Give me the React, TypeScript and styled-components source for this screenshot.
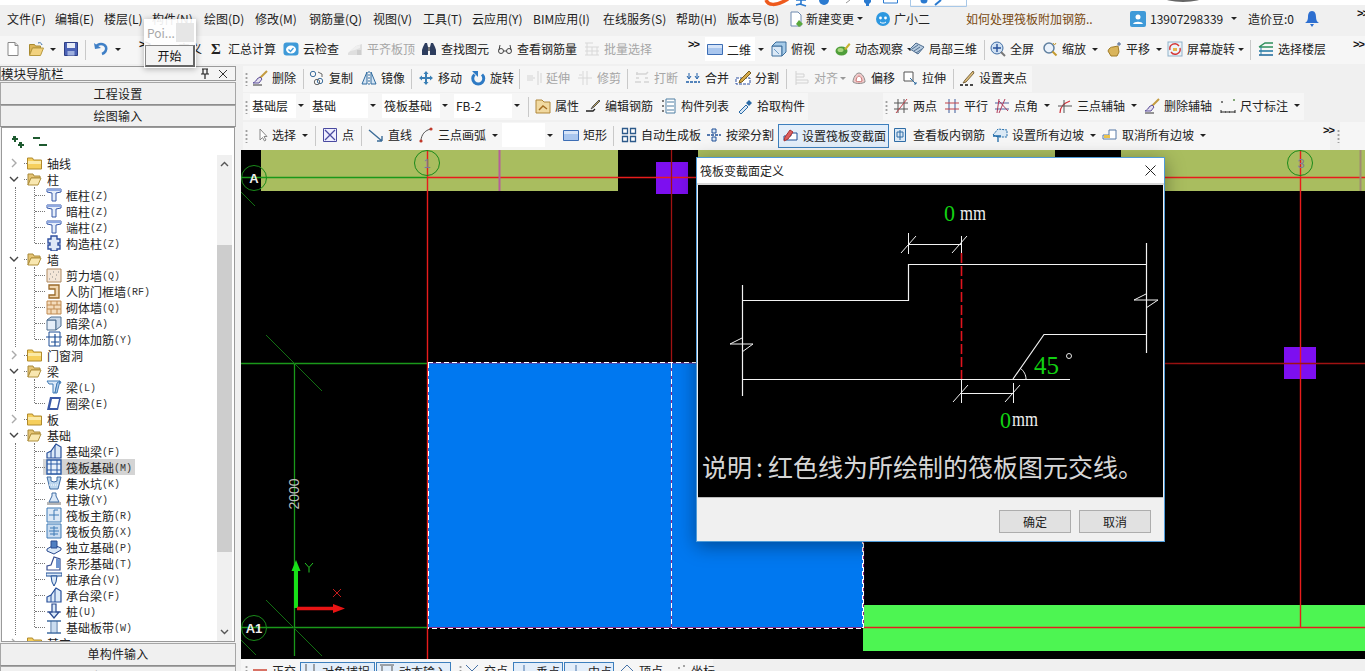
import React from 'react';
import styled, { createGlobalStyle } from 'styled-components';

const Global = createGlobalStyle`
  html, body { margin: 0; padding: 0; background: #f0f0f0; }
  * { box-sizing: border-box; }
  body { font-family: "Noto Sans CJK SC", "Liberation Sans", sans-serif; font-size: 12px; color: #222; }
`;

const Shell = styled.div`
  position: relative; width: 1365px; height: 671px; overflow: hidden;
  display: flex; flex-direction: column; background: #f0f0f0;
`;
const TopStrip = styled.div`height: 5px; background: #fff; flex: none;`;
const ImeBar = styled.svg`position: absolute; left: 760px; top: 0; width: 460px; height: 9px;`;
const Bar = styled.div<{ $h: number; $bg?: string; $pb?: number; $top?: number; $w?: number }>`
  flex: none; height: ${p => p.$h}px; display: flex; align-items: center; white-space: nowrap;
  background: ${p => p.$bg || 'transparent'};
  padding-bottom: ${p => p.$pb || 0}px;
  margin-top: ${p => p.$top || 0}px;
  width: ${p => (p.$w ? p.$w + 'px' : 'auto')};
`;
const Item = styled.div<{ $w?: number; $muted?: boolean; $pad?: number }>`
  flex: none; display: flex; align-items: center; height: 100%;
  width: ${p => (p.$w ? p.$w + 'px' : 'auto')};
  padding-left: ${p => p.$pad || 0}px; padding-bottom: 2px;
  color: ${p => (p.$muted ? '#a6a6a6' : '#222')};
  line-height: 16px;
`;
const GlyphSvg = styled.svg<{ $muted?: boolean; $flush?: boolean }>`
  flex: none; width: 16px; height: 16px; margin-right: ${p => (p.$flush ? 0 : 4)}px; display: block;
  opacity: ${p => (p.$muted ? 0.5 : 1)};
`;
const MenuGlyph = styled(GlyphSvg)`margin-right: 2px;`;
const Caret = styled.i<{ $gap?: number; $muted?: boolean }>`
  flex: none; width: 0; height: 0; margin-left: ${p => p.$gap ?? 6}px;
  border-left: 3px solid transparent; border-right: 3px solid transparent;
  border-top: 3px solid ${p => (p.$muted ? '#999' : '#222')};
`;
const Sep = styled.div<{ $w: number }>`
  flex: none; width: ${p => p.$w}px; height: 20px; border-left: 1px solid #c9c9c9;
`;
const Grip = styled.div<{ $w: number; $left?: number }>`
  flex: none; width: ${p => p.$w}px; height: 14px; margin-left: ${p => p.$left || 0}px;
  background-image: radial-gradient(circle, #a0a0a0 1px, transparent 1.2px);
  background-size: 3px 4px; background-repeat: repeat-y; background-position: 2px 0;
`;
const More = styled.div<{ $w: number; $pad?: number }>`
  flex: none; width: ${p => p.$w}px; padding-left: ${p => p.$pad || 0}px; align-self: flex-start;
  font: bold 11px/14px "Liberation Sans", sans-serif; letter-spacing: -1px; color: #111; padding-top: 1px;
`;
const Spacer = styled.div<{ $w: number }>`flex: none; width: ${p => p.$w}px;`;
const ToolGroup = styled.div<{ $left?: number; $bg?: string }>`
  display: flex; align-items: center; height: 100%; margin-left: ${p => p.$left || 0}px;
  background: ${p => p.$bg || '#f6f6f6'};
`;
const ComboBox = styled.div<{ $w: number; $pad?: number }>`
  flex: none; width: ${p => p.$w}px; height: 24px; background: #fff; display: flex; align-items: center;
  padding-left: ${p => p.$pad ?? 2}px;
`;
const ComboWrap = styled.div<{ $w: number }>`flex: none; width: ${p => p.$w}px; display: flex; align-items: center; height: 100%; padding-bottom: 2px;`;
const ActiveTool = styled.div<{ $w: number; $pad: number; $h: number; $left?: number }>`
  flex: none; width: ${p => p.$w}px; height: ${p => p.$h}px; padding: 0 0 1px ${p => p.$pad}px;
  margin-left: ${p => p.$left || 0}px; white-space: nowrap;
  display: flex; align-items: center; border: 1px solid #3d7fbd; background: #e3eefa; overflow: hidden;
`;
const Notice = styled(Item)`color: #7a4a12;`;
const Body = styled.div`flex: 1; min-height: 0; display: flex;`;
const Sidebar = styled.aside`flex: none; width: 241px; display: flex; flex-direction: column; padding-top: 2px; overflow: hidden;`;
const PanelHead = styled.div`
  width: 236px; height: 15px; flex: none; display: flex; align-items: center; background: #f4f4f4;
  border: 1px solid #9a9a9a; line-height: 13px; font-size: 12.5px; overflow: hidden; margin-bottom: 1px;
`;
const HeadTitle = styled.span`flex: 1;`;
const HeadBtn = styled.svg`flex: none; width: 12px; height: 12px; margin-right: 6px;`;
const NavButton = styled.div<{ $h: number; $pb?: number }>`
  width: 236px; height: ${p => p.$h}px; flex: none; display: flex; align-items: center; justify-content: center;
  background: #f0f0f0; border: 1px solid #a6a6a6; border-bottom-color: #8e8e8e; letter-spacing: 0.2px; padding-bottom: ${p => p.$pb ?? 2}px;
`;
const TreePanel = styled.div`
  width: 234px; height: 515px; flex: none; margin: 0 0 1px 1px; background: #fff; border: 1px solid #9a9a9a;
  padding: 0 2px 0 1px; display: flex; flex-direction: column;
`;
const ExpandBar = styled.div`flex: none; height: 27px; display: flex; align-items: center; padding: 0 0 0 8px; gap: 5px;`;
const TreeArea = styled.div`flex: 1; min-height: 0; display: flex;`;
const TreeList = styled.div`flex: 1; min-width: 0; overflow: hidden;`;
const Row = styled.div<{ $pad: number }>`
  height: 16px; display: flex; align-items: center; padding-left: ${p => p.$pad}px; position: relative; white-space: nowrap;
`;
const Chev = styled.svg`flex: none; width: 10px; height: 10px; margin-right: 5px;`;
const FolderDots = styled.span`flex: none; width: 3px; border-top: 1px dotted #777;`;
const FolderSvg = styled.svg`flex: none; width: 15px; height: 14px; margin-right: 5px;`;
const Children = styled.div`
  position: relative; margin-left: 31px;
  &::before { content: ''; position: absolute; left: 0; top: 0; bottom: 8px; border-left: 1px dotted #777; }
  &::after { content: ''; position: absolute; left: -19px; top: 0; bottom: 0; border-left: 1px dotted #777; }
`;
const ChildDots = styled.span`position: absolute; left: 1px; top: 8px; width: 10px; border-top: 1px dotted #777;`;
const ChildBody = styled.div<{ $sel?: boolean }>`
  display: flex; align-items: center; height: 16px; padding: 0 3px; background: ${p => (p.$sel ? '#d4d4d4' : 'transparent')};
`;
const KeyText = styled.span`font: 10px/16px "Liberation Mono", monospace; color: #333; margin-top: 3px;`;
const Scroll = styled.div`flex: none; width: 15px; background: #f0f0f0; display: flex; flex-direction: column; align-items: center;`;
const ScrollArrow = styled.svg<{ $end?: boolean }>`flex: none; width: 9px; height: 6px; margin: ${p => (p.$end ? 'auto 0 6px' : '6px 0 0')};`;
const ScrollThumb = styled.div`flex: none; width: 15px; height: 307px; margin-top: 78px; background: #cdcdcd;`;
const Main = styled.main`flex: 1; min-width: 0; display: flex; flex-direction: column; padding-top: 2px;`;
const CanvasSvg = styled.svg`display: block; flex: none; width: 1124px; height: 509px; background: #000;`;
const Dialog = styled.section`
  position: absolute; left: 696px; top: 157px; width: 469px; height: 385px; background: #f0f0f0;
  border: 1px solid #4f9bd8; box-shadow: 0 4px 18px rgba(0,0,0,.38); display: flex; flex-direction: column;
`;
const DialogTitle = styled.header`
  flex: none; height: 27px; background: #fff; display: flex; align-items: center; justify-content: space-between;
  padding: 0 8px 0 3px; border-bottom: 2px solid #d8d8d8;
`;
const DialogPanel = styled.div`flex: none; height: 313px; margin: 0 1px; background: #000; display: flex; flex-direction: column; border-bottom: 1px solid #bbb;`;
const SketchSvg = styled.svg`display: block; flex: none; width: 465px; height: 263px;`;
const Caption = styled.div`
  flex: none; height: 36px; line-height: 36px; padding-left: 4px; font-size: 25px; color: #d6d6d6; white-space: nowrap; font-weight: 400;
`;
const CaptionColon = styled.span`margin: 0 5px 0 4px;`;
const DialogFoot = styled.footer`flex: 1; display: flex; align-items: center; justify-content: flex-end; padding: 3px 13px 0 0; gap: 8px;`;
const DialogBtn = styled.button`
  width: 72px; height: 23px; padding: 0; background: #e1e1e1; border: 1px solid #adadad; color: #222;
  font: 12px "Noto Sans CJK SC", sans-serif;
`;
const PoiWrap = styled.div`
  position: absolute; left: 144px; top: 19px; width: 52px; height: 49px; background: rgba(255,255,255,.9);
  box-shadow: 0 1px 6px rgba(0,0,0,.3); display: flex; flex-direction: column; padding-top: 3px;
`;
const PoiHead = styled.div`flex: none; height: 20px; display: flex; align-items: center; justify-content: space-between; padding: 0 2px 0 3px; color: #a8a8a8; font-size: 12px;`;
const PoiSquare = styled.span`width: 18px; height: 19px; background: #e6e6e6;`;
const PoiBtn = styled.div`
  margin: 3px 0 0 1px; width: 50px; height: 22px; flex: none; background: #f3f3f3; border: 1px solid #8a8a8a;
  border-right: 2px solid #666; border-bottom: 2px solid #666; display: flex; align-items: center; justify-content: center; color: #111;
`;

const icons: Record<string, React.ReactNode> = {
  new: <><path d="M3 1.5h7l3 3v10H3z" fill="#fff" stroke="#888" /><path d="M10 1.5v3h3" fill="#ddd" stroke="#888" /></>,
  open: <><path d="M1.5 3.5h5l1 1.5h5v2h-8l-3 7z" fill="#dcb558" stroke="#a88a30" /><path d="M4.5 7h11l-3 7.5h-11z" fill="#f2d27f" stroke="#b89a40" /><path d="M10 2c2-.8 3.5 0 4 2" fill="none" stroke="#3a6ea8" /></>,
  save: <><path d="M1.5 1.5h13v13h-13z" fill="#4c63b6" stroke="#2e3f85" /><path d="M4 2h8v5H4z" fill="#e7ecf7" /><path d="M4.5 10h7v4.5h-7z" fill="#9fb0de" /></>,
  undo: <><path d="M3 6c2-4 8-4 10 0 1 3-1 6-4 7" fill="none" stroke="#3f7fc6" strokeWidth="2.6" /><path d="M1 2l1 6 6-1z" fill="#3f7fc6" /></>,
  sum: <text x="3" y="13" fontFamily="Liberation Serif" fontWeight="700" fontSize="15" fill="#222">Σ</text>,
  cloud: <><rect x=".5" y="1.5" width="15" height="13" rx="3" fill="#3f9ad8" /><ellipse cx="8" cy="8.5" rx="5" ry="4" fill="#fff" /><path d="M5.5 8.5l2 2 3-3.5" fill="none" stroke="#3f9ad8" strokeWidth="1.3" /></>,
  alignTop: <><path d="M1 12l8-7 6-2v11H1z" fill="#c9c9c9" /><path d="M3 10l6-5 4-1v3l-5 2z" fill="#e9e9e9" /><path d="M10 9h4v5h-4z" fill="#a8a8a8" /></>,
  binoc: <><path d="M2 6l2-4h2l1 4v8H1V9z" fill="#2d3d5e" /><path d="M14 6l-2-4h-2L9 6v8h6V9z" fill="#2d3d5e" /><path d="M7 6h2v4H7z" fill="#777" /></>,
  glasses: <><circle cx="4" cy="10" r="2.5" fill="none" stroke="#444" /><circle cx="12" cy="10" r="2.5" fill="none" stroke="#444" /><path d="M6.5 10h3M2 9l1-5M14 9l-1-5" stroke="#444" fill="none" /></>,
  batch: <path d="M1 2h8M1 6h14M1 10h14M1 14h14M3 2v12M8 6v8M13 6v8" stroke="#bcbcbc" fill="none" />,
  rect2d: <><path d="M.5 3.5h15v10H.5z" fill="#a9c6ee" stroke="#3d6eb5" /><path d="M1 4h14v3H1z" fill="#d6e4f8" /></>,
  cube: <><path d="M1 5h10v10H1z" fill="#dce9f6" stroke="#3c6f9c" /><path d="M1 5l4-4h10v10l-4 4V5z" fill="#a7cbe8" stroke="#3c6f9c" /><path d="M3 8l5 5" stroke="#6d9cc5" /></>,
  orbit: <><ellipse cx="6.5" cy="10" rx="6" ry="4.5" fill="#4f9e3a" /><ellipse cx="5.5" cy="9" rx="3" ry="2" fill="#a7d57e" /><path d="M9 8l5-6 1.5 1.5L11 9z" fill="#c7b12e" /></>,
  local3d: <><path d="M1 8l6-6 8 4-6 7z" fill="#b8cce0" stroke="#4f6e90" /><path d="M3 8l6-4M5 10l6-4M7 12l6-4" stroke="#4f6e90" /></>,
  fullscreen: <><circle cx="7" cy="7" r="6" fill="#cfe0f2" stroke="#3f6ca3" /><path d="M7 3v8M3 7h8" stroke="#27509a" strokeWidth="1.4" /><path d="M11 11l4 4" stroke="#777" strokeWidth="2" /></>,
  zoom: <><circle cx="7" cy="7" r="5" fill="#eaf2fb" stroke="#5f7f9f" strokeWidth="1.5" /><path d="M10.5 10.5l4 4" stroke="#c49a2e" strokeWidth="2" /><path d="M11 2l1.5 2L14 2" fill="none" stroke="#c49a2e" /></>,
  pan: <><path d="M2 10c1-3 3-4 5-4l5-1 1 6-2 4H5z" fill="#d9b45b" stroke="#a07c28" /><path d="M11 3h4M13 1v4" stroke="#46608e" /></>,
  screenRot: <><rect x="1" y="1" width="14" height="14" fill="#ecf4f9" stroke="#8fb1c9" /><path d="M3 9a5 5 0 0 1 9-4" fill="none" stroke="#d43434" strokeWidth="1.4" /><path d="M13 7a5 5 0 0 1-9 4" fill="none" stroke="#d43434" strokeWidth="1.4" /><path d="M6 7h4v3H6z" fill="#e6b64e" /></>,
  floors: <><path d="M1 6l6-4h8M1 6h14" stroke="#2e8f5c" strokeWidth="1.4" fill="none" /><path d="M1 10h14" stroke="#2b7ea8" strokeWidth="1.6" /><path d="M1 14h14" stroke="#276e9f" strokeWidth="1.6" /><path d="M3 6v8" stroke="#2b7ea8" /></>,
  broom: <><path d="M15 1L7 9" stroke="#c39a3f" strokeWidth="2" /><path d="M8 7l2 2-3 4H1c2-1 4-3 4-4z" fill="#e4e0ef" stroke="#5d4f9a" /><path d="M1 15h9" stroke="#333" /></>,
  copy: <><circle cx="4" cy="4" r="2.7" fill="none" stroke="#3d6f9e" /><circle cx="11" cy="11" r="2.7" fill="none" stroke="#3d6f9e" /><circle cx="8" cy="12" r="2.7" fill="none" stroke="#666" /><path d="M9 2l4 2v3" fill="none" stroke="#666" /></>,
  mirror: <><path d="M1 14L6 2v12zM15 14L10 2v12z" fill="#d6e6f5" stroke="#2f6b9f" /><path d="M8 1v14" stroke="#2f6b9f" strokeDasharray="2 1" /></>,
  move: <path d="M8 1l2.5 3H9v3h3V5.5L15 8l-3 2.5V9H9v3h1.5L8 15l-2.5-3H7V9H4v1.5L1 8l3-2.5V7h3V4H5.5z" fill="#3a7fb5" />,
  spin: <><path d="M12 4.5a5.5 5.5 0 1 1-7.5 0" fill="none" stroke="#2e7ac4" strokeWidth="3" /><path d="M2 1h6v6z" fill="#2e7ac4" /></>,
  extend: <path d="M1 8h8M1 6h6M1 10h6M12 1v14M15 3v10" stroke="#b5b5b5" fill="none" />,
  trim: <path d="M1 8h14M6 1v14M10 1v14M2 5h3" stroke="#bcbcbc" fill="none" />,
  breakIc: <path d="M2 4h10l2-2M1 12h6M10 12h5M2 8h3M11 8h3M3 2v3" stroke="#b5b5b5" strokeWidth="1.5" fill="none" />,
  merge: <><path d="M1 12h14" stroke="#1f5fa8" strokeWidth="1.5" strokeDasharray="3 1" /><path d="M4 3v5M12 3v5M2 6l2 3 2-3M10 6l2 3 2-3" fill="none" stroke="#1f5fa8" /></>,
  split: <><path d="M1 8h14v6H1z" fill="#fff" stroke="#2a4ea0" strokeDasharray="3 1" /><path d="M14 1L5 10l-1 3 3-1 9-9z" fill="#d4a94a" stroke="#7b5f1f" /></>,
  alignIc: <path d="M2 1v14M2 4h8v3H2M2 10h12v3H2" stroke="#b0b0b0" fill="none" />,
  offset: <><path d="M2 12c0-4 3-9 6-9s6 5 6 9c-3 2-9 2-12 0z" fill="#f0c9c9" stroke="#8e8e8e" /><path d="M5 11c0-3 2-5 3-5s3 2 3 5c-2 1-4 1-6 0z" fill="#fff" stroke="#c97474" /></>,
  stretch: <><path d="M2 2h9v9H2z" fill="#fff" stroke="#555" /><path d="M8 8l6 6M12 14h2v-2" stroke="#2f6b9f" fill="none" /></>,
  gripIc: <><path d="M14 1L6 10l-2 3 3-1 8-9z" fill="#e1c27c" stroke="#7b6540" /><path d="M1 15h3M6 15h3M11 15h3" stroke="#111" strokeWidth="1.6" /></>,
  attr: <><path d="M1 2h6l2 2h6v11H1z" fill="#f1d9a0" stroke="#b0873a" /><path d="M4 12l4-4 4 3" fill="none" stroke="#a46c20" strokeWidth="1.4" /></>,
  editBar: <><path d="M1 13h7l2-2" fill="none" stroke="#222" strokeWidth="1.3" /><path d="M15 3l-6 6-3 2 2-3 6-6z" fill="#b9a15b" stroke="#555" /></>,
  list: <><path d="M5 1h9v14H5z" fill="#fff" stroke="#4f7ea3" /><path d="M6 4h7M6 8h7M6 12h7" stroke="#4f7ea3" /><path d="M1 3h2M1 8h2M1 13h2" stroke="#555" strokeWidth="1.6" /></>,
  picker: <><path d="M2 14l7-7 2 2-7 7z" fill="#d7e6f5" stroke="#2a6aa6" /><path d="M9 5l3-3 3 3-3 3z" fill="#2a6aa6" /></>,
  twoPt: <><path d="M1 5h14M1 11h14M5 1v14M11 1v14" stroke="#555" fill="none" /><path d="M14 1L3 15" stroke="#c1424a" /></>,
  parallel: <><path d="M5 1v14M11 1v14" stroke="#3c5a9a" fill="none" /><path d="M1 5h14M1 11h14" stroke="#c1424a" fill="none" /></>,
  angle: <><path d="M1 5h14M1 11h14" stroke="#4f5f9a" /><path d="M5 1L3 15M11 1L5 15M14 13L5 3" stroke="#b03a5a" fill="none" /></>,
  threePt: <><path d="M3 15c0-6 4-10 10-12" stroke="#d2313a" fill="none" strokeWidth="1.2" /><path d="M1 8h14M7 2v13" stroke="#555" /></>,
  dim: <><path d="M1 12v3M15 12v3M1 14h14" stroke="#222" /><circle cx="2" cy="4" r="1" fill="#555" /><circle cx="14" cy="2" r="1" fill="#5b8e4c" /><path d="M5 14h1M9 14h1" stroke="#222" /></>,
  arrow: <path d="M8 2v11l2.5-2.5 2 3.5 1.5-1-2-3.5H15z" fill="#fff" stroke="#888" />,
  pointIc: <><path d="M1.5 1.5h13v13h-13z" fill="#eef" stroke="#4a4aa0" /><path d="M3 3l10 10M13 3L3 13" stroke="#4a4aa0" strokeWidth="1.3" /></>,
  lineIc: <path d="M1 3l13 11M14 14V9M14 14H9" stroke="#3b6c98" strokeWidth="1.4" fill="none" />,
  arcIc: <><path d="M3 14C3 8 7 3 13 2" fill="none" stroke="#555" /><circle cx="3" cy="14" r="1.6" fill="#c0392b" /><circle cx="13" cy="2" r="1.6" fill="#c0392b" /></>,
  autoIc: <path d="M1.5 1.5h5v5h-5zM9.5 1.5h5v5h-5zM1.5 9.5h5v5h-5zM9.5 9.5h5v5h-5z" fill="#fff" stroke="#2d5a8a" strokeWidth="1.3" />,
  beamSplit: <><path d="M6 2h4v4H6zM6 10h4v4H6z" fill="#dbe8f6" stroke="#1f4f96" /><path d="M1 8h14" stroke="#1f4f96" strokeWidth="1.4" strokeDasharray="3 1" /></>,
  varSec: <><path d="M2 8h7V5h6v7H2z" fill="#fff" stroke="#1f4f96" /><path d="M8 2L3 9l-1 4 4-2 5-7z" fill="#df5f5f" stroke="#a33" /></>,
  viewBar: <><path d="M1.5 1.5h11v13h-11z" fill="#dce9f5" stroke="#2f6da6" /><path d="M4 5h6v5H4zM7 3v10" fill="none" stroke="#2f6da6" /></>,
  allSlope: <><path d="M1 8l5-6 9 1v7H6z" fill="#dbe9f5" stroke="#1f6aa8" strokeDasharray="2 1" /><path d="M6 9v6M1 9h8" stroke="#1f6aa8" strokeWidth="1.3" /></>,
  cancelSlope: <><path d="M7 3h7v9H1V8h6z" fill="#fff" stroke="#5679a6" /><path d="M2 8h6v3H2z" fill="#eac24a" /></>,
  orth: <path d="M1 7h14M1 10h14" stroke="#d87265" strokeWidth="1.8" />,
  ortho2: <path d="M4 0v15h8V0" stroke="#555" fill="none" />,
  boxT: <path d="M1 1h14M3 2v13h10V2" stroke="#555" fill="none" />,
  cross: <path d="M2 2l12 12M14 2L2 14" stroke="#4773a8" fill="none" />,
  vert: <path d="M8 1v14" stroke="#4773a8" />,
  house: <path d="M8 2l6 6M8 2L2 8" stroke="#4773a8" fill="none" />,
  coord: <><circle cx="2" cy="10" r="1" fill="#888" /><circle cx="8" cy="5" r="1" fill="#888" /><circle cx="13" cy="3" r="1" fill="#888" /></>,
  pillar: <><path d="M1 2h14v3l-5 1v8H6V6L1 5z" fill="#e6eefa" stroke="#3758a8" /><path d="M1 3h14" stroke="#8fa8e0" strokeWidth="2" /></>,
  puzzle: <path d="M5 1h6v3h3v4h-2v2h2v4h-3v2H5v-2H2v-4h2V8H2V4h3z" fill="#dfe8f7" stroke="#2f4f9f" strokeWidth="1.4" />,
  shear: <><path d="M1 2h14v13H1z" fill="#f4e6d8" stroke="#b08a60" /><path d="M3 12h1M6 10h1M9 12h1M4 7h1M10 8h1M12 5h1M7 5h1" stroke="#888" /></>,
  doorWall: <path d="M3 2h10v13H3v-3h6V6H3z" fill="#f0d6b0" stroke="#9a6a2a" strokeWidth="1.3" />,
  brick: <><path d="M1 2h14v13H1z" fill="#f4dcbc" stroke="#c08a50" /><path d="M1 6h14M1 10h14M5 2v4M11 2v4M8 6v4M5 10v5M11 10v5" stroke="#c08a50" /></>,
  block: <><path d="M1 5h9v10H1z" fill="#e6eef8" stroke="#4f6e90" /><path d="M1 5l4-3h10v9l-5 4V5z" fill="#c9d8ea" stroke="#4f6e90" /></>,
  wallBar: <><path d="M3 1h11v14H3z" fill="#fff" stroke="#1f4f96" /><path d="M0 6h16M9 3v12M5 11h8" stroke="#1f4f96" strokeWidth="1.2" /></>,
  beamIc: <><path d="M1 2h13l1 2-4 1-2 9H7V5H3z" fill="#dbe9f8" stroke="#3f7ab5" /><path d="M11 4l3-2-3 12H9z" fill="#a8c8e8" stroke="#3f7ab5" /></>,
  ring: <path d="M4 2h11l-3 13H1zM6 4l-2 9h7l2-9z" fill="#3c5aa8" fillRule="evenodd" />,
  footBeam: <><path d="M1 15V10l4-2 5-7 5 3v11z" fill="#dbe9f8" stroke="#274f99" strokeWidth="1.2" /><path d="M9 2v13M5 8v7" stroke="#274f99" /></>,
  raft: <><path d="M1 1h14v14H1z" fill="#eaf1fa" stroke="#2a5aa5" strokeWidth="1.4" /><path d="M5 1v14M11 1v14M1 5h14M1 11h14" stroke="#2a5aa5" /></>,
  pit: <><path d="M1 2h4v4l3 1 3-1V2h4L12 14H4z" fill="#bcd6ee" stroke="#3f6ca3" /><path d="M3 10h10" stroke="#fff" strokeDasharray="1 1" /></>,
  pier: <><path d="M1 11h14v3H1z" fill="#b5b5b5" /><path d="M6 2h4v3l3 6H3l3-6z" fill="#dbe9f8" stroke="#3f6ca3" /></>,
  rebarMain: <><path d="M1 1h14v14H1z" fill="#dde9f6" stroke="#3f7ab5" /><path d="M8 3v10M3 8h10M8 3h4" stroke="#3f7ab5" /></>,
  rebarNeg: <><path d="M1 1h14v14H1z" fill="#c9dcf0" stroke="#3f7ab5" /><path d="M8 3v10M3 8h10M4 5h8M4 11h8" stroke="#3f7ab5" /></>,
  isolated: <><path d="M1 10l7-4 7 3v2l-7 4-7-3z" fill="#dbe9f8" stroke="#2a4a8f" /><path d="M5 2h6v7H5z" fill="#4f7ec0" stroke="#2a4a8f" /></>,
  strip: <><path d="M1 15v-4l4-1 3-8 6 2v11z" fill="#fff" stroke="#3a4f90" strokeWidth="1.2" /><path d="M10 3l4 2v8h-4z" fill="#6f94cf" /></>,
  cap: <><path d="M0 2h16v3H0z" fill="#dbe9f8" stroke="#1f4f96" /><path d="M5 5h6l-1 6-2 4-2-4z" fill="#dbe9f8" stroke="#1f4f96" /></>,
  pile: <><path d="M6 1h4v8h3l-5 6-5-6h3z" fill="#dbe9f8" stroke="#2a4a8f" strokeWidth="1.2" /><path d="M1 9h14" stroke="#2a4a8f" /></>,
  band: <><path d="M1 2h14M1 14h14" stroke="#3f6ca3" strokeWidth="1.4" /><path d="M5 2v12M11 2v12" stroke="#3f6ca3" /><path d="M6 3h4v10H6z" fill="#c9dcf0" /></>,
  noteDoc: <><path d="M3 1h7l3 3v11H3z" fill="#fff" stroke="#6e8ab0" /><path d="M11 9l4 4-4 3-3-3z" fill="#5aa83c" /></>,
  bot: <><circle cx="8" cy="8" r="7" fill="#2d98e0" /><circle cx="5.5" cy="7" r="1.4" fill="#fff" /><circle cx="10.5" cy="7" r="1.4" fill="#fff" /><path d="M5 11c2 1.5 4 1.5 6 0" stroke="#fff" fill="none" /></>,
  user: <><rect width="16" height="16" rx="2" fill="#3f9ad8" /><circle cx="8" cy="6" r="2.5" fill="#fff" /><path d="M3 13c1-3 9-3 10 0z" fill="#fff" /></>,
  bell: <path d="M8 0c3 0 4 3 4 6s1 5 3 6H1c2-1 3-3 3-6s1-6 4-6zM6 13h4l-2 3z" fill="#2d6fd0" />,
  plusTwo: <path d="M2 2h3v2h2v2H5v2H3V6H1V4h1zM8 8h3v2h2v2h-2v2H9v-2H7v-2h1z" fill="#1e5a30" />,
  minusTwo: <path d="M1 3h7v2H1zM7 10h8v2H7z" fill="#1e5a30" />,
};

const Glyph = ({ n, muted, mini }: { n: string; muted?: boolean; mini?: boolean }) =>
  mini ? <MenuGlyph viewBox="0 0 16 16">{icons[n]}</MenuGlyph> : <GlyphSvg viewBox="0 0 16 16" $muted={muted}>{icons[n]}</GlyphSvg>;

type T = { w: number; i?: string; t?: string; c?: number; m?: boolean; pad?: number };
const Tool = ({ w, i, t, c, m, pad }: T) => (
  <Item $w={w} $muted={m} $pad={pad}>
    {i && <Glyph n={i} muted={m} />}
    {t && <span>{t}</span>}
    {c !== undefined && <Caret $gap={c} $muted={m} />}
  </Item>
);
const Combo = ({ w, box, t }: { w: number; box: number; t?: string }) => (
  <ComboWrap $w={w}><ComboBox $w={box}>{t}</ComboBox><Caret $gap={2} /></ComboWrap>
);

const menus: [string, number][] = [['文件(F)', 48], ['编辑(E)', 49], ['楼层(L)', 48], ['构件(N)', 52], ['绘图(D)', 51], ['修改(M)', 54], ['钢筋量(Q)', 64], ['视图(V)', 50], ['工具(T)', 49], ['云应用(Y)', 61], ['BIM应用(I)', 70], ['在线服务(S)', 73], ['帮助(H)', 51], ['版本号(B)', 61]];

const MenuRow = () => (
  <Bar $h={31} $pb={2}>
    <Spacer $w={7} />
    {menus.map(([t, w]) => <Item key={t} $w={w}><span>{t}</span></Item>)}
    <Item $w={87}><Glyph n="noteDoc" mini /><span>新建变更</span><Caret $gap={3} /></Item>
    <Item $w={91}><Glyph n="bot" mini /><Spacer $w={1} /><span>广小二</span></Item>
    <Notice $w={164}>如何处理筏板附加钢筋..</Notice>
    <Item $w={118}><Glyph n="user" /><span>13907298339</span><Caret $gap={8} /></Item>
    <Item $w={56}>造价豆:0</Item>
    <Item $w={53}><Glyph n="bell" /></Item>
    <More $w={8}>{'>>'}</More>
  </Bar>
);

const QuickRow = () => (
  <Bar $h={28} $bg="#f6f6f6">
    <Spacer $w={5} />
    <Tool w={23} i="new" />
    <Item $w={35}><GlyphSvg viewBox="0 0 16 16">{icons.open}</GlyphSvg><Caret $gap={2} /></Item>
    <Tool w={22} i="save" />
    <Sep $w={8} />
    <Item $w={40}><GlyphSvg viewBox="0 0 16 16">{icons.undo}</GlyphSvg><Caret $gap={2} /></Item>
    <More $w={45} $pad={6}>{'>>'}</More>
    <Tool w={30} t="定义" />
    <Tool w={75} i="sum" t="汇总计算" />
    <Tool w={64} i="cloud" t="云检查" />
    <Tool w={74} i="alignTop" t="平齐板顶" m />
    <Tool w={76} i="binoc" t="查找图元" />
    <Tool w={87} i="glasses" t="查看钢筋量" />
    <Tool w={67} i="batch" t="批量选择" m />
    <More $w={54} $pad={37}>{'>>'}</More>
    <ComboWrap $w={66}>
      <ComboBox $w={50} $pad={2}><Glyph n="rect2d" /><span>二维</span></ComboBox>
      <Caret $gap={3} />
    </ComboWrap>
    <Tool w={64} i="cube" t="俯视" c={6} />
    <Tool w={74} i="orbit" t="动态观察" c={4} />
    <Tool w={75} i="local3d" t="局部三维" />
    <Sep $w={6} />
    <Tool w={52} i="fullscreen" t="全屏" />
    <Tool w={64} i="zoom" t="缩放" c={6} />
    <Tool w={61} i="pan" t="平移" c={6} />
    <Tool w={83} i="screenRot" t="屏幕旋转" c={3} />
    <Sep $w={8} />
    <Tool w={95} i="floors" t="选择楼层" />
    <More $w={8}>{'>>'}</More>
  </Bar>
);

const EditRow = () => (
  <Bar $h={26}>
    <Spacer $w={2} />
    <ToolGroup>
      <Grip $w={9} />
      <Tool w={51} i="broom" t="删除" /><Sep $w={6} />
      <Tool w={52} i="copy" t="复制" /><Tool w={50} i="mirror" t="镜像" /><Sep $w={7} />
      <Tool w={52} i="move" t="移动" /><Tool w={49} i="spin" t="旋转" /><Sep $w={7} />
      <Tool w={51} i="extend" t="延伸" m /><Tool w={50} i="trim" t="修剪" m /><Sep $w={7} />
      <Tool w={51} i="breakIc" t="打断" m /><Tool w={50} i="merge" t="合并" /><Tool w={51} i="split" t="分割" /><Sep $w={8} />
      <Tool w={57} i="alignIc" t="对齐" c={2} m /><Tool w={51} i="offset" t="偏移" /><Tool w={51} i="stretch" t="拉伸" /><Sep $w={6} />
      <Tool w={73} i="gripIc" t="设置夹点" />
    </ToolGroup>
  </Bar>
);

const PartRow = () => (
  <Bar $h={27} $top={1}>
    <Spacer $w={2} />
    <ToolGroup>
      <Grip $w={7} />
      <Combo w={60} box={46} t="基础层" />
      <Combo w={72} box={58} t="基础" />
      <Combo w={72} box={58} t="筏板基础" />
      <Combo w={74} box={58} t="FB-2" />
      <Sep $w={7} />
      <Tool w={50} i="attr" t="属性" />
      <Tool w={76} i="editBar" t="编辑钢筋" />
      <Tool w={76} i="list" t="构件列表" />
      <Tool w={71} i="picker" t="拾取构件" />
    </ToolGroup>
    <ToolGroup $left={75}>
      <Grip $w={10} />
      <Tool w={51} i="twoPt" t="两点" />
      <Tool w={50} i="parallel" t="平行" />
      <Tool w={63} i="angle" t="点角" c={6} />
      <Tool w={87} i="threePt" t="三点辅轴" c={6} />
      <Tool w={76} i="broom" t="删除辅轴" />
      <Tool w={84} i="dim" t="尺寸标注" c={6} />
    </ToolGroup>
  </Bar>
);

const DrawRow = () => (
  <Bar $h={28} $top={2}>
    <Spacer $w={2} />
    <ToolGroup>
      <Grip $w={9} />
      <Tool w={63} i="arrow" t="选择" c={6} /><Sep $w={7} />
      <Tool w={39} i="pointIc" t="点" /><Sep $w={7} />
      <Tool w={50} i="lineIc" t="直线" />
      <Tool w={84} i="arcIc" t="三点画弧" c={6} />
      <Combo w={61} box={43} />
      <Tool w={50} i="rect2d" t="矩形" /><Sep $w={8} />
      <Tool w={85} i="autoIc" t="自动生成板" />
      <Tool w={72} i="beamSplit" t="按梁分割" />
      <ActiveTool $w={111} $pad={3} $h={24}><Glyph n="varSec" /><span>设置筏板变截面</span></ActiveTool>
      <Spacer $w={4} />
      <Tool w={99} i="viewBar" t="查看板内钢筋" />
      <Tool w={110} i="allSlope" t="设置所有边坡" c={6} />
      <Tool w={113} i="cancelSlope" t="取消所有边坡" c={6} />
      <More $w={115} $pad={108}>{'>>'}</More>
    </ToolGroup>
    <Grip $w={5} $left={5} />
    <ToolGroup><Spacer $w={25} /></ToolGroup>
  </Bar>
);

const StatusRow = () => (
  <Bar $h={26} $w={472} $bg="#f6f6f6">
    <Spacer $w={2} />
    <Grip $w={9} />
    <Tool w={48} i="orth" t="正交" />
    <ActiveTool $w={75} $pad={1} $h={20}><Glyph n="ortho2" /><span>对象捕捉</span></ActiveTool>
    <ActiveTool $w={75} $pad={2} $h={20} $left={1}><Glyph n="boxT" /><span>动态输入</span></ActiveTool>
    <Spacer $w={6} />
    <Grip $w={7} />
    <Tool w={49} i="cross" t="交点" />
    <ActiveTool $w={50} $pad={2} $h={20}><Glyph n="vert" /><span>垂点</span></ActiveTool>
    <ActiveTool $w={50} $pad={3} $h={20} $left={1}><Glyph n="vert" /><span>中点</span></ActiveTool>
    <Spacer $w={5} />
    <Tool w={52} i="house" t="顶点" />
    <Tool w={42} i="coord" t="坐标" />
  </Bar>
);

const NavCanvas = () => (
  <CanvasSvg viewBox="241 150 1124 509">
    <rect x="261" y="150" width="357" height="41" fill="#a9bd5f" />
    <rect x="698" y="150" width="357" height="8" fill="#a9bd5f" />
    <rect x="1121" y="150" width="244" height="41" fill="#a9bd5f" />
    <rect x="428" y="363" width="435" height="265" fill="#0078f0" />
    <rect x="863" y="605" width="502" height="46" fill="#4df552" />
    <rect x="656" y="162" width="32" height="32" fill="#7d0ff0" />
    <rect x="1284" y="347" width="32" height="32" fill="#7d0ff0" />
    <path d="M241 177.5H427M241 363.5H427M241 627.5H427M294.5 363V656" stroke="#1a981a" strokeWidth="1.3" fill="none" />
    <path d="M241 192l14 14M266 335l56 56M266 600l56 56M241 640l15 15" stroke="#126f12" fill="none" />
    <path d="M427.5 150V659M427 177.5H1365M1300.5 150V627M863 627.5H1365" stroke="#e81c1c" strokeWidth="1.4" fill="none" />
    <path d="M671.5 150V363M1165 363.5H1365" stroke="#a01212" strokeWidth="1.3" fill="none" />
    <path d="M427.5 363H863.5V627.5H427.5M671.5 363V628" stroke="#8a2a88" strokeWidth="1.2" fill="none" />
    <path d="M428 362.5H863.5V628.5H428M428.5 363V628M671.5 363V628M862.5 363V628" stroke="#fff" strokeDasharray="5 3" fill="none" />
    <path d="M499.5 150v41" stroke="#b55f9b" strokeWidth="2" />
    <path d="M1360.5 150v41" stroke="#a08a70" strokeWidth="2" />
    <g fill="none" stroke="#1a8a1a">
      <circle cx="427" cy="163" r="12.5" /><circle cx="254" cy="178" r="12.5" /><circle cx="254" cy="628" r="12.5" /><circle cx="1300" cy="163" r="12.5" />
    </g>
    <g fontFamily="Liberation Sans, sans-serif" fontSize="13" textAnchor="middle">
      <text x="427" y="168" fill="#7d7a9a">1</text>
      <text x="1301" y="168" fill="#7d7a9a">3</text>
      <text x="254" y="183" fill="#eee" fontWeight="700">A</text>
      <text x="254" y="633" fill="#eee" fontWeight="700">A1</text>
      <text transform="translate(299 494) rotate(-90)" fill="#bdbdbd" fontSize="14">2000</text>
    </g>
    <path d="M296 608V568" stroke="#18e018" strokeWidth="4" />
    <path d="M296 560l4.5 11h-9z" fill="#18e018" />
    <path d="M297 608.5h36" stroke="#e81414" strokeWidth="3.5" />
    <path d="M345 608.5l-12-4.5v9z" fill="#e81414" />
    <path d="M305 563l4 4.5 4-4.5M309 567.5v5" stroke="#24c524" fill="none" />
    <path d="M333 589l8 8M341 589l-8 8" stroke="#c51c1c" fill="none" />
  </CanvasSvg>
);

const Sketch = () => (
  <SketchSvg viewBox="0 0 465 263">
    <g stroke="#f2f2f2" strokeWidth="1" fill="none">
      <path d="M210.5 48v21M263.5 51v17M210 59.5h53M203 68l15-17M254 68l15-17" />
      <path d="M44.5 115.5H210.5V79.5H448M44.5 100V211M448.5 58V168" strokeWidth="1.2" />
      <path d="M44.5 194.5H372M315 194L346 149.5H448" strokeWidth="1.2" />
      <path d="M32 159L44 153M32 159H55L44 167M436 115L448 109M436 115H460L448 123" />
      <path d="M328 194c0-4-2-8-6-11" />
      <path d="M263.5 195v23M315.5 198v20M263 208.5h52M255 217l15-17M307 217l15-17" />
    </g>
    <path d="M263.5 68V194" stroke="#e0141e" strokeWidth="1.6" strokeDasharray="10 3" />
    <circle cx="371" cy="171" r="2.5" fill="none" stroke="#e8e8e8" />
    <text x="246" y="36" fill="#12d012" fontFamily="Liberation Serif, serif" fontSize="24" textLength="11" lengthAdjust="spacingAndGlyphs">0</text>
    <text x="262" y="35" fill="#eee" fontFamily="Liberation Serif, serif" fontSize="20" textLength="26" lengthAdjust="spacingAndGlyphs">mm</text>
    <text x="336" y="189" fill="#12d012" fontFamily="Liberation Serif, serif" fontSize="26" textLength="25" lengthAdjust="spacingAndGlyphs">45</text>
    <text x="302" y="243" fill="#12d012" fontFamily="Liberation Serif, serif" fontSize="24" textLength="11" lengthAdjust="spacingAndGlyphs">0</text>
    <text x="314" y="241" fill="#eee" fontFamily="Liberation Serif, serif" fontSize="20" textLength="26" lengthAdjust="spacingAndGlyphs">mm</text>
  </SketchSvg>
);

const VarDialog = () => (
  <Dialog>
    <DialogTitle>
      <span>筏板变截面定义</span>
      <svg width="11" height="11" viewBox="0 0 11 11"><path d="M.5.5l10 10M10.5.5l-10 10" stroke="#222" fill="none" /></svg>
    </DialogTitle>
    <DialogPanel>
      <Sketch />
      <Caption>说明<CaptionColon>:</CaptionColon>红色线为所绘制的筏板图元交线。</Caption>
    </DialogPanel>
    <DialogFoot>
      <DialogBtn>确定</DialogBtn>
      <DialogBtn>取消</DialogBtn>
    </DialogFoot>
  </Dialog>
);

type Leaf = [string, string, string, boolean?];
type Node = { name: string; open?: boolean; items?: Leaf[] };
const tree: Node[] = [
  { name: '轴线' },
  { name: '柱', open: true, items: [['pillar', '框柱', '(Z)'], ['pillar', '暗柱', '(Z)'], ['pillar', '端柱', '(Z)'], ['puzzle', '构造柱', '(Z)']] },
  { name: '墙', open: true, items: [['shear', '剪力墙', '(Q)'], ['doorWall', '人防门框墙', '(RF)'], ['brick', '砌体墙', '(Q)'], ['block', '暗梁', '(A)'], ['wallBar', '砌体加筋', '(Y)']] },
  { name: '门窗洞' },
  { name: '梁', open: true, items: [['beamIc', '梁', '(L)'], ['ring', '圈梁', '(E)']] },
  { name: '板' },
  { name: '基础', open: true, items: [['footBeam', '基础梁', '(F)'], ['raft', '筏板基础', '(M)', true], ['pit', '集水坑', '(K)'], ['pier', '柱墩', '(Y)'], ['rebarMain', '筏板主筋', '(R)'], ['rebarNeg', '筏板负筋', '(X)'], ['isolated', '独立基础', '(P)'], ['strip', '条形基础', '(T)'], ['cap', '桩承台', '(V)'], ['footBeam', '承台梁', '(F)'], ['pile', '桩', '(U)'], ['band', '基础板带', '(W)']] },
  { name: '其它' },
];

const TreeFolder = ({ open }: { open?: boolean }) => (
  <FolderSvg viewBox="0 0 15 14">
    {open
      ? <><path d="M1 2h5l1 2h6v2H4l-3 7z" fill="#e5c474" stroke="#a98a3a" /><path d="M4 6h10l-3 7H1z" fill="#f8e7b0" stroke="#b0903c" /></>
      : <><path d="M.5 2h5l1 2h8v9H.5z" fill="#f6cf5c" stroke="#b08a2c" /><path d="M1 5h13v3H1z" fill="#fbeaa8" /></>}
  </FolderSvg>
);
const Chevron = ({ open }: { open?: boolean }) => (
  <Chev viewBox="0 0 10 10">
    {open ? <path d="M1 3l4 4 4-4" fill="none" stroke="#444" strokeWidth="1.4" /> : <path d="M3 1l4 4-4 4" fill="none" stroke="#aaa" strokeWidth="1.4" />}
  </Chev>
);

const Side = () => (
  <Sidebar>
    <PanelHead>
      <HeadTitle>模块导航栏</HeadTitle>
      <HeadBtn viewBox="0 0 12 12"><path d="M3 1h6M4 1v5M8 1v5M2 6h8M6 6v5" stroke="#222" fill="none" strokeWidth="1.2" /></HeadBtn>
      <HeadBtn viewBox="0 0 12 12"><path d="M2 2l8 8M10 2l-8 8" stroke="#333" fill="none" /></HeadBtn>
    </PanelHead>
    <NavButton $h={23} $pb={0}>工程设置</NavButton>
    <NavButton $h={22}>绘图输入</NavButton>
    <TreePanel>
      <ExpandBar>
        <GlyphSvg viewBox="0 0 16 16" $flush>{icons.plusTwo}</GlyphSvg>
        <GlyphSvg viewBox="0 0 16 16" $flush>{icons.minusTwo}</GlyphSvg>
      </ExpandBar>
      <TreeArea>
        <TreeList>
          {tree.map(n => (
            <div key={n.name}>
              <Row $pad={6}><Chevron open={n.open} /><FolderDots /><TreeFolder open={n.open} /><span>{n.name}</span></Row>
              {n.items && (
                <Children>
                  {n.items.map(([ic, t, k, sel]) => (
                    <Row $pad={9} key={t + k}>
                      <ChildDots />
                      <ChildBody $sel={sel}><Glyph n={ic} /><span>{t}</span><KeyText>{k}</KeyText></ChildBody>
                    </Row>
                  ))}
                </Children>
              )}
            </div>
          ))}
        </TreeList>
        <Scroll>
          <ScrollArrow viewBox="0 0 9 6"><path d="M1 5l3.5-3.5L8 5" fill="none" stroke="#555" strokeWidth="1.4" /></ScrollArrow>
          <ScrollThumb />
          <ScrollArrow $end viewBox="0 0 9 6"><path d="M1 1l3.5 3.5L8 1" fill="none" stroke="#555" strokeWidth="1.4" /></ScrollArrow>
        </Scroll>
      </TreeArea>
    </TreePanel>
    <NavButton $h={23}>单构件输入</NavButton>
    <NavButton $h={23}>报表预览</NavButton>
  </Sidebar>
);

export default function App() {
  return (
    <Shell>
      <Global />
      <TopStrip />
      <MenuRow />
      <QuickRow />
      <Body>
        <Side />
        <Main>
          <EditRow />
          <PartRow />
          <DrawRow />
          <NavCanvas />
          <StatusRow />
        </Main>
      </Body>
      <ImeBar viewBox="0 0 460 9">
        <path d="M6 0c2 5 9 7 22-1" fill="none" stroke="#ee5a1d" strokeWidth="3.5" />
        <path d="M36 0h10M41 0v4M36 5l4-1 6 2" fill="none" stroke="#2a7ad0" strokeWidth="1.6" />
        <circle cx="64" cy="0" r="5" fill="#2a7ad0" />
        <path d="M86 3l4-3" stroke="#999" fill="none" />
        <path d="M104 0h7v2l-2 2v2h-3V4l-2-2z" fill="#2a7ad0" />
        <path d="M123.5 0v3h14V0" fill="none" stroke="#2a7ad0" />
        <path d="M150.5 0v6.5h56V0" fill="none" stroke="#a8c8e8" />
        <circle cx="164" cy="0" r="3.5" fill="#2a7ad0" />
        <path d="M175 5l6-5" stroke="#2a7ad0" strokeWidth="2" />
        <ellipse cx="423" cy="-3" rx="20" ry="5" fill="#666" />
      </ImeBar>
      <VarDialog />
      <PoiWrap>
        <PoiHead><span>Poi...</span><PoiSquare /></PoiHead>
        <PoiBtn>开始</PoiBtn>
      </PoiWrap>
    </Shell>
  );
}
